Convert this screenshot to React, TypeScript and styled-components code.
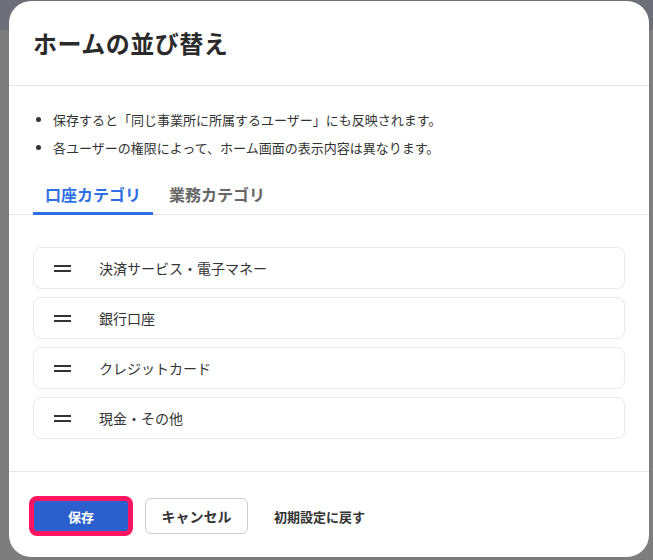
import React from "react";
import styled, { createGlobalStyle } from "styled-components";

const Global = createGlobalStyle`
  html, body { margin: 0; padding: 0; }
  body { font-family: "Noto Sans CJK JP", "Noto Sans", sans-serif; background: #7b7b7b; }
`;

const Backdrop = styled.div`
  width: 653px; height: 560px; box-sizing: border-box;
  padding: 1px 4px 3px 9px;
  background: linear-gradient(#6c6f78 0, #6c6f78 30px, #7d7d7d 30px);
  display: flex;
`;

const Modal = styled.div`
  flex: 1; background: #fff; border-radius: 22px;
  display: flex; flex-direction: column; overflow: hidden;
`;

const Header = styled.div`
  height: 85px; box-sizing: border-box; padding: 24px 24px 0;
  border-bottom: 1px solid #e6e6e6; flex-shrink: 0;
`;
const Title = styled.h1`
  margin: 0; font-size: 24px; font-weight: 700; color: #2a2a2a; letter-spacing: 0.5px;
`;

const Body = styled.div` padding: 20px 0 0; `;
const Notes = styled.ul`
  margin: 0; padding: 0 24px 0 44px; font-size: 13px; color: #333;
  li { line-height: 28px; }
`;
const Tabs = styled.div`
  margin-top: 16px; display: flex; gap: 4px; padding: 0 24px;
  border-bottom: 1px solid #e6e6e6;
`;
const Tab = styled.div<{ $active?: boolean }>`
  padding: 4px 12px 6px; font-size: 16px; font-weight: 700;
  color: ${p => (p.$active ? "#2f6fe4" : "#666")};
  border-bottom: 3px solid ${p => (p.$active ? "#2f6fe4" : "transparent")};
  margin-bottom: -1px;
`;
const List = styled.div`
  padding: 32px 24px 32px; display: flex; flex-direction: column; gap: 8px;
  border-bottom: 1px solid #e6e6e6;
`;
const Item = styled.div`
  height: 42px; box-sizing: border-box; border: 1px solid #e9e9e9; border-radius: 8px;
  display: flex; align-items: center; padding-left: 20px; gap: 28px;
  font-size: 14px; color: #333;
`;
const Handle = styled.div`
  width: 17px; height: 7px; border-top: 2.5px solid #333; border-bottom: 2.5px solid #333;
  box-sizing: border-box;
`;
const Footer = styled.div`
  padding: 24px 20px; display: flex; align-items: center; gap: 12px;
`;
const Primary = styled.button`
  width: 104px; height: 40px; box-sizing: border-box; border-radius: 8px;
  border: 5px solid #ff1560; background: #2b5fcd; color: #fff; padding: 0;
  font: 700 13px "Noto Sans CJK JP", sans-serif;
`;
const Secondary = styled.button`
  width: 103px; height: 36px; border-radius: 6px; border: 1px solid #ccc; background: #fff;
  font: 700 14px "Noto Sans CJK JP", sans-serif; color: #333;
`;
const TextBtn = styled.button`
  border: none; background: none; padding: 0 14px;
  font: 700 13px "Noto Sans CJK JP", sans-serif; color: #333;
`;

const items = ["決済サービス・電子マネー", "銀行口座", "クレジットカード", "現金・その他"];

export default function App() {
  return (
    <>
      <Global />
      <Backdrop>
        <Modal>
          <Header><Title>ホームの並び替え</Title></Header>
          <Body>
            <Notes>
              <li>保存すると「同じ事業所に所属するユーザー」にも反映されます。</li>
              <li>各ユーザーの権限によって、ホーム画面の表示内容は異なります。</li>
            </Notes>
            <Tabs>
              <Tab $active>口座カテゴリ</Tab>
              <Tab>業務カテゴリ</Tab>
            </Tabs>
            <List>
              {items.map(t => (
                <Item key={t}><Handle />{t}</Item>
              ))}
            </List>
          </Body>
          <Footer>
            <Primary>保存</Primary>
            <Secondary>キャンセル</Secondary>
            <TextBtn>初期設定に戻す</TextBtn>
          </Footer>
        </Modal>
      </Backdrop>
    </>
  );
}
